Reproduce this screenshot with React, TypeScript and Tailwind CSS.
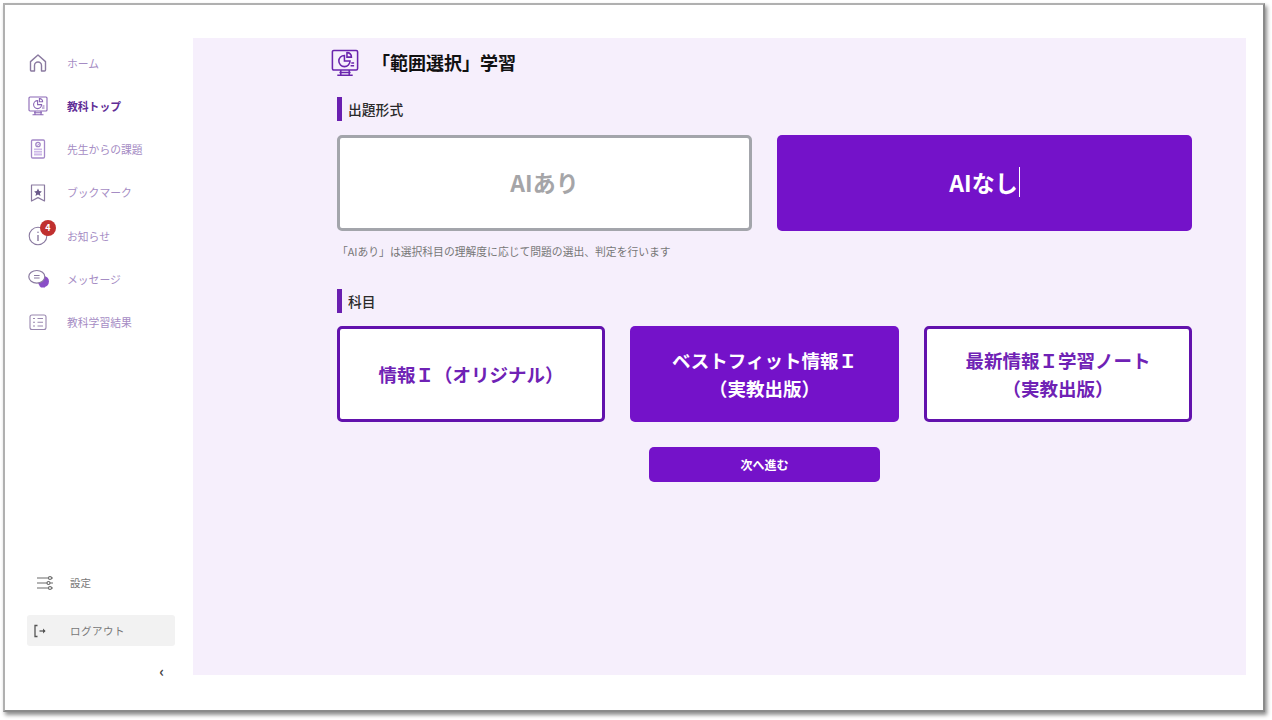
import type { ReactNode } from "react";

const PURPLE = "#7412c9";

const HomeIcon = () => (
  <svg width="20" height="20" viewBox="0 0 20 20" fill="none" stroke="#8a7aa0" strokeWidth="1.4" strokeLinejoin="round">
    <path d="M2.5 8.6 10 2l7.5 6.6V17a1 1 0 0 1-1 1h-3V12.5a3.5 3.5 0 0 0-7 0V18h-3a1 1 0 0 1-1-1z" />
  </svg>
);

const ScreenIcon = ({ color = "#8a66b5", size = 20 }: { color?: string; size?: number }) => (
  <svg width={size} height={size} viewBox="0 0 20 20" fill="none" stroke={color} strokeWidth="1.1">
    <rect x="1" y="1" width="18" height="14" rx="1" />
    <path d="M7 15v3.5M13 15v3.5M4.5 18.7h11M6 16.8h8" />
    <path d="M9.6 4.6a4 4 0 1 0 4 4h-4z" />
    <path d="M11.4 2.6a3 3 0 0 1 3.2 3.2h-3.2z" />
    <path d="M14.5 10h2M14 12h2.5" />
  </svg>
);

const TaskIcon = () => (
  <svg width="20" height="20" viewBox="0 0 20 20" fill="none" stroke="#a488c8" strokeWidth="1.3">
    <rect x="3.5" y="1" width="13" height="18" rx="1.2" />
    <circle cx="10" cy="5.5" r="2.2" />
    <path d="M8.9 5.5l.9.9 1.4-1.6" strokeWidth="0.8" />
    <rect x="6" y="9.5" width="8" height="7" fill="#cdb8e8" stroke="none" />
    <path d="M6 11.5h8M6 14h8" stroke="#fff" strokeWidth="0.8" />
  </svg>
);

const BookmarkIcon = () => (
  <svg width="20" height="20" viewBox="0 0 20 20" fill="none" stroke="#8a7aa0" strokeWidth="1.2" strokeLinejoin="round">
    <path d="M3.5 2h13v16L10 14.6 3.5 18z" />
    <path d="M10 5.6l1.2 2.5 2.7.3-2 1.8.6 2.7L10 11.5l-2.5 1.4.6-2.7-2-1.8 2.7-.3z" fill="#6b5a8a" stroke="none" />
  </svg>
);

const InfoIcon = () => (
  <svg width="20" height="20" viewBox="0 0 20 20" fill="none" stroke="#8a7aa0" strokeWidth="1.1">
    <circle cx="10" cy="10" r="8.8" />
    <circle cx="10" cy="6.3" r="0.8" fill="#8a7aa0" stroke="none" />
    <path d="M10 9v6" strokeWidth="1.4" />
  </svg>
);

const MessageIcon = () => (
  <svg width="22" height="20" viewBox="0 0 22 20" fill="none">
    <circle cx="15.5" cy="12.5" r="5.5" fill="#8a4fc7" />
    <path d="M11 16.5h6v2h-4z" fill="#8a4fc7" />
    <ellipse cx="8.8" cy="7.8" rx="8" ry="6.3" fill="#fff" stroke="#8a7aa0" strokeWidth="1.2" />
    <path d="M6 6.5h5.6M6 9h5.6" stroke="#8a7aa0" strokeWidth="1.1" />
  </svg>
);

const ResultIcon = () => (
  <svg width="20" height="20" viewBox="0 0 20 20" fill="none" stroke="#9a88b0" strokeWidth="1.1">
    <rect x="2" y="3" width="16" height="14.5" rx="2" />
    <path d="M9.5 6.5h5.5M9.5 10.2h5.5M9.5 14h5.5M5 6.5h2M5 10.2h2M5 14h2" />
  </svg>
);

const SettingsIcon = () => (
  <svg width="18" height="16" viewBox="0 0 18 16" fill="none" stroke="#6b6b6b" strokeWidth="1.2">
    <path d="M1 3h11.5M15.5 3H17M1 8h10M14 8h3M1 13h11.5M15.5 13H17" />
    <circle cx="14" cy="3" r="1.5" />
    <circle cx="12.5" cy="8" r="1.5" />
    <circle cx="14" cy="13" r="1.5" />
  </svg>
);

const LogoutIcon = () => (
  <svg width="14" height="14" viewBox="0 0 14 14" fill="none" stroke="#555" strokeWidth="1.3">
    <path d="M4.5 1.5H2v11h2.5" />
    <path d="M6.5 7h5.5" />
    <path d="M10 4.6 12.6 7 10 9.4z" fill="#555" stroke="none" />
  </svg>
);

function NavItem({ icon, label, active, badge }: { icon: ReactNode; label: string; active?: boolean; badge?: boolean }) {
  return (
    <div className="flex h-[20px] items-center">
      <div className="relative flex w-[40px] justify-start pl-px">
        {icon}
        {badge && (
          <span className="absolute left-[13px] top-[-6px] flex h-[16px] w-[16px] items-center justify-center rounded-full bg-[#c0302f] text-[9px] font-bold leading-none text-white">
            4
          </span>
        )}
      </div>
      <span className={active ? "text-[10.8px] font-bold text-[#5f2d96]" : "text-[10.8px] text-[#a58cc4]"}>{label}</span>
    </div>
  );
}

function SectionLabel({ children }: { children: ReactNode }) {
  return (
    <div className="flex h-[24px] items-center gap-[6px]">
      <div className="h-[24px] w-[5px] bg-[#6a1fb0]" />
      <span className="text-[13.8px] font-medium text-[#2a2a2a]">{children}</span>
    </div>
  );
}

function SubjectCard({ active, children }: { active?: boolean; children: ReactNode }) {
  return (
    <div
      className={
        active
          ? "flex h-[96px] w-[269px] items-center justify-center rounded-[5px] bg-[#7412c9] text-center text-[18.5px] font-bold leading-[28px] text-white"
          : "flex h-[96px] w-[268px] items-center justify-center rounded-[5px] border-[3px] border-[#6212ad] bg-white text-center text-[18.5px] font-bold leading-[28px] text-[#6f22b5]"
      }
    >
      <div>{children}</div>
    </div>
  );
}

export default function App() {
  return (
    <div
      className="h-[720px] w-[1272px] overflow-hidden bg-white pl-[3px] pt-[3px]"
      style={{ fontFamily: '"Noto Sans CJK JP", "Noto Sans", sans-serif' }}
    >
      <div className="flex h-[709px] w-[1262px] border-2 border-t-[#b0b0b0] border-l-[#b0b0b0] border-r-[#8a8a8a] border-b-[#8a8a8a] bg-white shadow-[2px_3px_4px_rgba(0,0,0,0.45)]">
        {/* sidebar */}
        <div className="flex w-[188px] shrink-0 flex-col pl-[22px] pt-[48px]">
          <div className="flex flex-col gap-[23.2px]">
            <NavItem icon={<HomeIcon />} label="ホーム" />
            <NavItem icon={<ScreenIcon />} label="教科トップ" active />
            <NavItem icon={<TaskIcon />} label="先生からの課題" />
            <NavItem icon={<BookmarkIcon />} label="ブックマーク" />
            <NavItem icon={<InfoIcon />} label="お知らせ" badge />
            <NavItem icon={<MessageIcon />} label="メッセージ" />
            <NavItem icon={<ResultIcon />} label="教科学習結果" />
          </div>
          <div className="mt-auto flex flex-col pb-[32px]">
            <div className="flex h-[20px] items-center pl-[9px] text-[10.5px] text-[#777]">
              <div className="w-[34px]">
                <SettingsIcon />
              </div>
              設定
            </div>
            <div className="mt-[22px] flex h-[31px] w-[148px] items-center rounded-[3px] bg-[#f2f2f2] pl-[6px] text-[10.5px] tracking-[0.5px] text-[#777]">
              <div className="w-[37px]">
                <LogoutIcon />
              </div>
              ログアウト
            </div>
            <div className="mt-[18px] w-[137px] text-right text-[15px] font-bold leading-[14px] text-[#444]">‹</div>
          </div>
        </div>

        {/* main */}
        <div className="mb-[35px] mt-[33px] flex w-[1053px] shrink-0 flex-col bg-[#f6effc] pl-[144px] pr-[54px]">
          <div className="ml-[-6px] flex h-[50px] items-center gap-[13px]">
            <ScreenIcon color="#6a25ad" size={28} />
            <h1 className="mt-[-2px] text-[18px] font-bold text-[#111]">「範囲選択」学習</h1>
          </div>
          <div className="mt-[9px]">
            <SectionLabel>出題形式</SectionLabel>
          </div>
          <div className="mt-[14px] flex justify-between">
            <div className="flex h-[96px] w-[415px] items-center justify-center rounded-[5px] border-[3px] border-[#a3a5ab] bg-white pb-[2px] text-[23px] font-bold text-[#a5a5a8]">
              AIあり
            </div>
            <div className="flex h-[96px] w-[415px] items-center justify-center rounded-[5px] bg-[#7412c9] pb-[2px] text-[23px] font-bold text-white">
              AIなし
              <span className="ml-px h-[30px] w-px bg-white" />
            </div>
          </div>
          <p className="mt-[13px] text-[10.8px] leading-[15px] text-[#777]">「AIあり」は選択科目の理解度に応じて問題の選出、判定を行います</p>
          <div className="mt-[30px]">
            <SectionLabel>科目</SectionLabel>
          </div>
          <div className="mt-[13px] flex justify-between">
            <SubjectCard>情報Ｉ（オリジナル）</SubjectCard>
            <SubjectCard active>
              ベストフィット情報Ｉ
              <br />
              （実教出版）
            </SubjectCard>
            <SubjectCard>
              最新情報Ｉ学習ノート
              <br />
              （実教出版）
            </SubjectCard>
          </div>
          <div className="mt-[25px] flex justify-center">
            <button
              type="button"
              className="h-[35px] w-[231px] rounded-[5px] text-[12px] font-bold text-white"
              style={{ backgroundColor: PURPLE }}
            >
              次へ進む
            </button>
          </div>
        </div>
      </div>
    </div>
  );
}
